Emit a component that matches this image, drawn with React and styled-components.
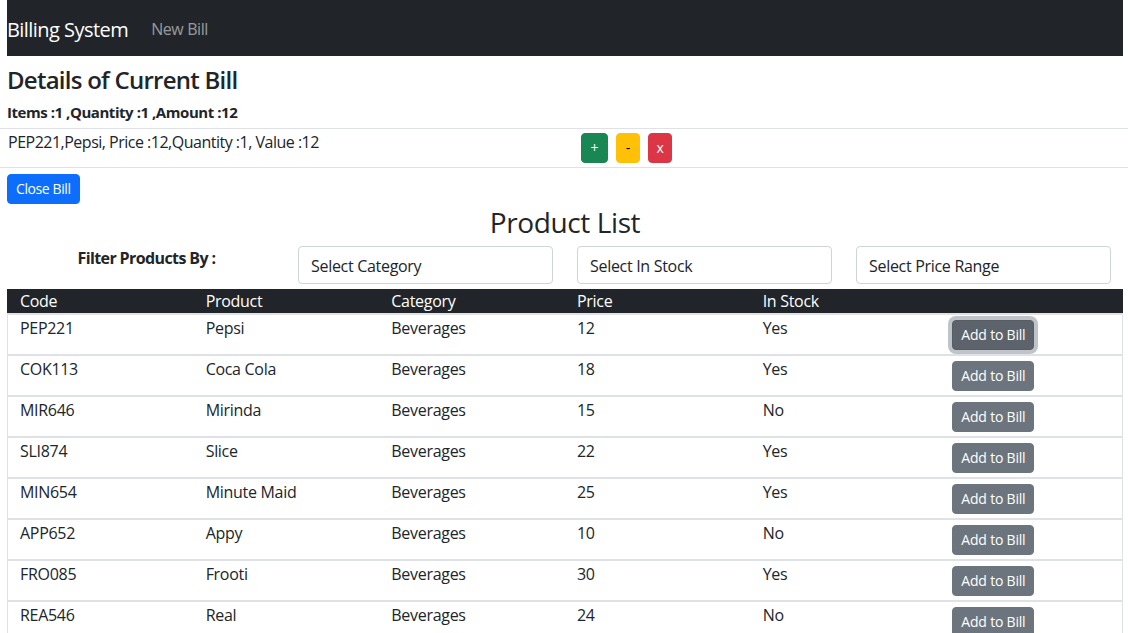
import React from "react";
import styled, { createGlobalStyle, css } from "styled-components";

const FONT = `"Open Sans", "Noto Sans", "Liberation Sans", sans-serif`;

const GlobalStyle = createGlobalStyle`
  html, body { margin: 0; padding: 0; background: #fff; }
  body {
    font-family: ${FONT};
    color: #212529;
    font-size: 16px;
    line-height: 1.5;
    overflow: hidden;
  }
  * { box-sizing: border-box; }
`;

const Page = styled.div`
  width: 1128px;
`;

const Navbar = styled.nav`
  margin: 0 5px 0 7px;
  height: 56px;
  background: #212529;
  display: flex;
  align-items: center;
  gap: 23px;
`;

const Brand = styled.a`
  color: #fff;
  font-size: 20px;
  line-height: 30px;
  text-decoration: none;
  letter-spacing: -0.55px;
  margin-top: 3px;
`;

const NavLink = styled.a`
  color: rgba(255, 255, 255, 0.55);
  font-size: 16px;
  text-decoration: none;
  letter-spacing: -0.4px;
  margin-top: 1px;
`;

const Main = styled.main`
  padding: 0 5px 0 7px;
`;

const Title = styled.h4`
  margin: 10px 0 0;
  font-size: 24px;
  line-height: 28px;
  font-weight: 600;
  letter-spacing: -0.75px;
`;

const Summary = styled.div`
  margin-top: 6px;
  font-size: 15px;
  line-height: 24px;
  font-weight: 700;
  letter-spacing: -0.45px;
`;

const BillRow = styled.div`
  margin: 4px -5px 0 -7px;
  padding: 0 5px 0 7px;
  border-top: 1px solid #dee2e6;
  border-bottom: 1px solid #dee2e6;
  display: grid;
  grid-template-columns: 1fr 1fr;
  column-gap: 24px;
`;

const BillText = styled.div`
  padding: 1px 0 0 1px;
  font-size: 16px;
  line-height: 24px;
  letter-spacing: -0.5px;
`;

const BillActions = styled.div`
  display: flex;
`;

const variants = {
  success: css`background: #198754; border-color: #198754; color: #fff;`,
  warning: css`background: #ffc107; border-color: #ffc107; color: #000;`,
  danger: css`background: #dc3545; border-color: #dc3545; color: #fff;`,
  primary: css`background: #0d6efd; border-color: #0d6efd; color: #fff;`,
  secondary: css`background: #6c757d; border-color: #6c757d; color: #fff;`,
};

const SmallButton = styled.button`
  font-family: ${FONT};
  font-size: 14px;
  line-height: 20px;
  height: 30px;
  padding: 4px 8px;
  border: 1px solid transparent;
  border-radius: 4px;
  cursor: pointer;
  letter-spacing: ${(p) => p.$ls ?? -0.2}px;
  ${(p) => variants[p.$variant]}
  ${(p) => p.$w && css`width: ${p.$w}px; padding: 4px 0;`}
  ${(p) =>
    p.$focus &&
    css`
      background: #5c636a;
      border-color: #565e64;
      box-shadow: 0 0 0 4px rgba(130, 138, 145, 0.5);
    `}
`;

const QtyButton = styled(SmallButton)`
  margin: 4px;
`;

const CloseRow = styled.div`
  margin-top: 6px;
`;

const ListTitle = styled.h2`
  margin: 1px 0 0;
  text-align: center;
  font-size: 28px;
  line-height: 34px;
  font-weight: 500;
  letter-spacing: -0.4px;
`;

const FilterRow = styled.div`
  margin-top: 7px;
  display: grid;
  grid-template-columns: repeat(4, 1fr);
  column-gap: 24px;
  padding: 0 12px;
`;

const FilterLabel = styled.div`
  text-align: center;
  font-weight: 700;
  font-size: 16px;
  line-height: 24px;
  letter-spacing: -0.6px;
`;

const Select = styled.div`
  height: 38px;
  border: 1px solid #ced4da;
  border-radius: 4px;
  padding: 7px 12px 5px;
  font-size: 16px;
  line-height: 24px;
  color: #212529;
  letter-spacing: -0.3px;
`;

const Table = styled.div`
  margin-top: 5px;
  border-left: 1px solid #dee2e6;
  border-right: 1px solid #dee2e6;
`;

const HeadRow = styled.div`
  display: grid;
  grid-template-columns: repeat(6, 1fr);
  background: #212529;
  color: #fff;
  height: 24px;
  margin: 0 -1px;
  padding: 0 1px;
`;

const HeadCell = styled.div`
  padding: 1px 0 0 12px;
  font-size: 16px;
  line-height: 23px;
  letter-spacing: -0.3px;
`;

const BodyRow = styled.div`
  display: grid;
  grid-template-columns: repeat(6, 1fr);
  height: 41px;
  border-top: 2px solid #dee2e6;
  align-items: start;
`;

const Cell = styled.div`
  padding: 1px 0 0 12px;
  font-size: 16px;
  line-height: 24px;
  letter-spacing: -0.3px;
`;

const ActionCell = styled.div`
  padding: 5px 0 0 16px;
`;

const products = [
  ["PEP221", "Pepsi", "Beverages", "12", "Yes"],
  ["COK113", "Coca Cola", "Beverages", "18", "Yes"],
  ["MIR646", "Mirinda", "Beverages", "15", "No"],
  ["SLI874", "Slice", "Beverages", "22", "Yes"],
  ["MIN654", "Minute Maid", "Beverages", "25", "Yes"],
  ["APP652", "Appy", "Beverages", "10", "No"],
  ["FRO085", "Frooti", "Beverages", "30", "Yes"],
  ["REA546", "Real", "Beverages", "24", "No"],
];

export default function App() {
  return (
    <Page>
      <GlobalStyle />
      <Navbar>
        <Brand href="#">Billing System</Brand>
        <NavLink href="#">New Bill</NavLink>
      </Navbar>
      <Main>
        <Title>Details of Current Bill</Title>
        <Summary>Items :1 ,Quantity :1 ,Amount :12</Summary>
        <BillRow>
          <BillText>PEP221,Pepsi, Price :12,Quantity :1, Value :12</BillText>
          <BillActions>
            <QtyButton $variant="success" $w={27}>+</QtyButton>
            <QtyButton $variant="warning" $w={24}>-</QtyButton>
            <QtyButton $variant="danger" $w={24}>x</QtyButton>
          </BillActions>
        </BillRow>
        <CloseRow>
          <SmallButton $variant="primary" $ls={-0.4}>Close Bill</SmallButton>
        </CloseRow>
        <ListTitle>Product List</ListTitle>
        <FilterRow>
          <FilterLabel>Filter Products By :</FilterLabel>
          <Select>Select Category</Select>
          <Select>Select In Stock</Select>
          <Select>Select Price Range</Select>
        </FilterRow>
        <Table>
          <HeadRow>
            <HeadCell>Code</HeadCell>
            <HeadCell>Product</HeadCell>
            <HeadCell>Category</HeadCell>
            <HeadCell>Price</HeadCell>
            <HeadCell>In Stock</HeadCell>
            <HeadCell />
          </HeadRow>
          {products.map((p, i) => (
            <BodyRow key={p[0]}>
              {p.map((v, j) => (
                <Cell key={j}>{v}</Cell>
              ))}
              <ActionCell>
                <SmallButton $variant="secondary" $focus={i === 0}>
                  Add to Bill
                </SmallButton>
              </ActionCell>
            </BodyRow>
          ))}
        </Table>
      </Main>
    </Page>
  );
}
